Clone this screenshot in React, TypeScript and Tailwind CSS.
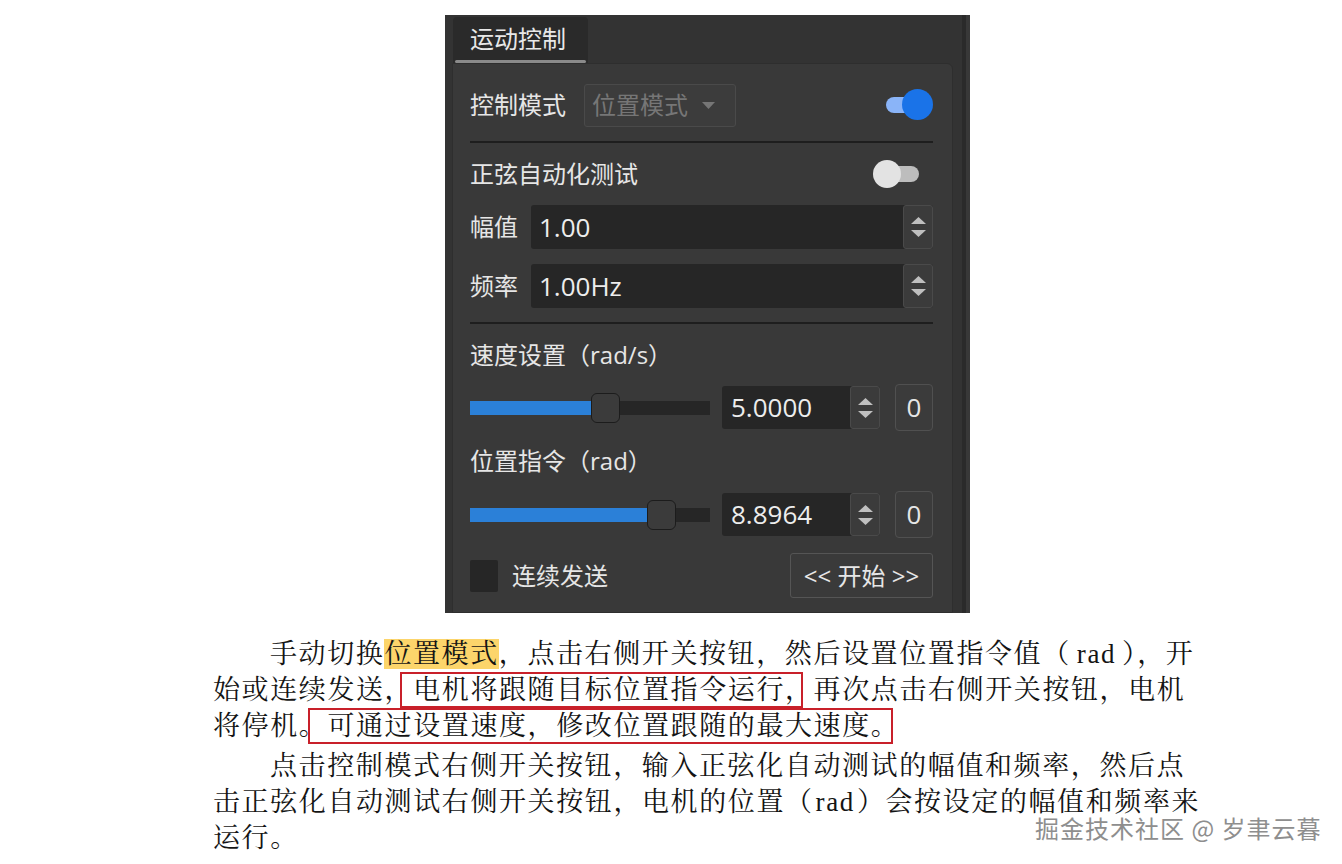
import React from "react";

function SpinArrows() {
  return (
    <div className="w-[30px] self-stretch bg-[#3b3b3b] border border-[#4a4a4a] rounded-[3px] flex flex-col items-center justify-center gap-[6px]">
      <svg width="15" height="7" viewBox="0 0 15 7">
        <path d="M7.5 0 L15 7 L0 7 Z" fill="#bfbfbf" />
      </svg>
      <svg width="15" height="7" viewBox="0 0 15 7">
        <path d="M0 0 L15 0 L7.5 7 Z" fill="#bfbfbf" />
      </svg>
    </div>
  );
}

function NumberField({ label, value }: { label: string; value: string }) {
  return (
    <div className="flex items-center h-[44px]">
      <div className="w-[61px] text-[24px] text-[#e6e6e6]">{label}</div>
      <div className="flex-1 h-full bg-[#262626] rounded-[3px] flex">
        <div className="flex-1 flex items-center pl-[8px] text-[26px] text-[#ededed]">{value}</div>
        <SpinArrows />
      </div>
    </div>
  );
}

function SliderRow({ fill, value }: { fill: number; value: string }) {
  return (
    <div className="flex items-center h-[47px]">
      <div className="relative w-[240px] h-[14px] bg-[#262626]">
        <div className="h-full bg-[#2b80d8]" style={{ width: fill }} />
        <div
          className="absolute top-[-8px] w-[29px] h-[30px] bg-[#3b3b3b] border border-[#1c1c1c] rounded-[6px]"
          style={{ left: fill - 4 }}
        />
      </div>
      <div className="ml-[12px] w-[158px] h-[43px] bg-[#262626] rounded-[3px] flex">
        <div className="flex-1 flex items-center pl-[9px] text-[26px] text-[#ededed]">{value}</div>
        <SpinArrows />
      </div>
      <div className="ml-[15px] w-[38px] h-[47px] bg-[#3b3b3b] border border-[#505050] rounded-[4px] flex items-center justify-center text-[26px] text-[#e6e6e6]">
        0
      </div>
    </div>
  );
}

function Panel() {
  return (
    <div className="w-[525px] h-[598px] bg-[#333333] flex font-['Open_Sans','Noto_Sans_CJK_SC',sans-serif] overflow-hidden">
      <div className="flex flex-col w-[508px]">
        <div className="h-[48px] pl-[8px] pt-[2px] flex">
          <div className="w-[135px] h-[46px] bg-[#2a2a2a] rounded-t-[4px] flex flex-col">
            <div className="flex-1 flex items-center pl-[17px] text-[24px] text-[#e8e8e8]">运动控制</div>
            <div className="mx-[2px] h-[3px] bg-[#8a8a8a] rounded-full" />
          </div>
        </div>
        <div className="ml-[7px] flex-1 bg-[#393939] border border-[#2e2e2e] rounded-tr-[6px] pl-[17px] pr-[19px] pt-[19px]">
          <div className="flex items-center h-[44px]">
            <div className="text-[24px] text-[#e6e6e6] w-[114px]">控制模式</div>
            <div className="w-[152px] h-[43px] bg-[#3c3c3c] border border-[#4a4a4a] rounded-[3px] flex items-center pl-[7px] text-[24px] text-[#767676]">
              位置模式
              <svg className="ml-[14px]" width="13" height="7" viewBox="0 0 13 7">
                <path d="M0 0 L13 0 L6.5 7 Z" fill="#767676" />
              </svg>
            </div>
            <div className="ml-auto relative w-[47px] h-[32px]">
              <div className="absolute left-0 top-[8px] w-[32px] h-[16px] rounded-full bg-[#8ab4f8]" />
              <div className="absolute right-0 top-0 w-[31px] h-[31px] rounded-full bg-[#1a73e8]" />
            </div>
          </div>
          <div className="mt-[14px] h-[2px] bg-[#1e1e1e]" />
          <div className="mt-[13px] flex items-center h-[36px]">
            <div className="text-[24px] text-[#e6e6e6]">正弦自动化测试</div>
            <div className="ml-auto mr-[14px] relative w-[46px] h-[28px]">
              <div className="absolute right-0 top-[6px] w-[36px] h-[16px] rounded-full bg-[#bdbdbd]" />
              <div className="absolute left-0 top-0 w-[28px] h-[28px] rounded-full bg-[#e3e3e3]" />
            </div>
          </div>
          <div className="mt-[13px]">
            <NumberField label="幅值" value="1.00" />
          </div>
          <div className="mt-[15px]">
            <NumberField label="频率" value="1.00Hz" />
          </div>
          <div className="mt-[14px] h-[2px] bg-[#1e1e1e]" />
          <div className="mt-[13px] h-[36px] flex items-center text-[24px] text-[#e6e6e6]">速度设置（rad/s）</div>
          <div className="mt-[11px]">
            <SliderRow fill={125} value="5.0000" />
          </div>
          <div className="mt-[12px] h-[36px] flex items-center text-[24px] text-[#e6e6e6]">位置指令（rad）</div>
          <div className="mt-[12px]">
            <SliderRow fill={181} value="8.8964" />
          </div>
          <div className="mt-[15px] flex items-center h-[45px]">
            <div className="w-[28px] h-[32px] bg-[#262626] rounded-[2px]" />
            <div className="ml-[14px] text-[24px] text-[#e6e6e6]">连续发送</div>
            <div className="ml-auto w-[143px] h-[45px] bg-[#3a3a3a] border border-[#555555] rounded-[3px] flex items-center justify-center text-[24px] text-[#e6e6e6]">
              &lt;&lt; 开始 &gt;&gt;
            </div>
          </div>
        </div>
      </div>
      <div className="flex-1 flex">
        <div className="w-[9px]" />
        <div className="w-[4px] bg-[#2a2a2a]" />
        <div className="flex-1 bg-[#383838]" />
      </div>
    </div>
  );
}

function Boxed({ children, left, right }: { children: React.ReactNode; left: number; right: number }) {
  return (
    <span className="relative inline-block">
      {children}
      <span
        className="absolute top-0 bottom-0 border-2 border-[#c8202a] pointer-events-none"
        style={{ left: -left, right: right }}
      />
    </span>
  );
}

export default function App() {
  return (
    <div className="relative w-[1342px] h-[864px] bg-white overflow-hidden">
      <div className="pt-[15px] pl-[445px]">
        <Panel />
      </div>
      <div className="mt-[23px] pl-[213px] text-[27px] leading-[36px] tracking-[1.6px] text-[#141414] font-['Liberation_Serif','Noto_Serif_CJK_SC','Noto_Sans_CJK_SC',serif] whitespace-nowrap">
        <div>
          <span className="inline-block w-[57px]" />
          手动切换<span className="bg-[#fcd56b]">位置模式</span>，点击右侧开关按钮，然后设置位置指令值（<span className="px-[6px]">rad</span>），开
        </div>
        <div>
          始或连续发送，<Boxed left={13} right={11}>电机将跟随目标位置指令运行，</Boxed>再次点击右侧开关按钮，电机
        </div>
        <div>
          将停机。<Boxed left={19} right={6}>可通过设置速度，修改位置跟随的最大速度。</Boxed>
        </div>
        <div className="mt-[4px]">
          <span className="inline-block w-[57px]" />
          点击控制模式右侧开关按钮，输入正弦化自动测试的幅值和频率，然后点
        </div>
        <div>
          击正弦化自动测试右侧开关按钮，电机的位置（<span className="px-[2px]">rad</span>）会按设定的幅值和频率来
        </div>
        <div>运行。</div>
      </div>
      <div className="absolute left-[1035px] top-[810px] text-[24px] tracking-[1px] text-[#8e8e8e] font-['Noto_Sans_CJK_SC',sans-serif] [text-shadow:0_0_2px_#ffffff,1px_1px_1px_#ffffff]">
        掘金技术社区 @ 岁聿云暮
      </div>
    </div>
  );
}
